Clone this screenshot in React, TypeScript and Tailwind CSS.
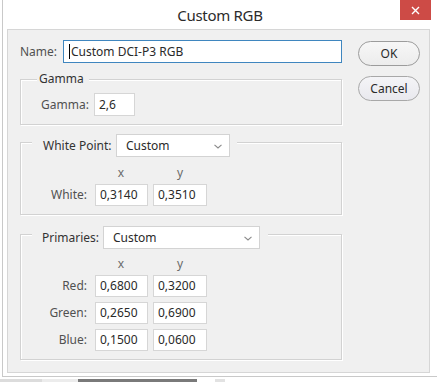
import React from "react";

const font = { fontFamily: '"Noto Sans", "Open Sans", sans-serif' };

function Select({ width }: { width: string }) {
  return (
    <div
      className={`${width} h-[23px] bg-white border border-[#d3d3d3] flex items-center justify-between pl-[9px] pr-[7px] text-[12px] text-[#2a2a2a]`}
    >
      <span>Custom</span>
      <svg width="8" height="5" viewBox="0 0 8 5" className="mt-[1px]">
        <path d="M0.5 0.8 L4 4 L7.5 0.8" fill="none" stroke="#8a8a8a" strokeWidth="1.1" />
      </svg>
    </div>
  );
}

function Val({ v, w }: { v: string; w: string }) {
  return (
    <div
      className={`${w} h-[22px] bg-white border border-[#d6d6d6] flex items-center pl-[4px] text-[12px] text-[#2a2a2a]`}
    >
      {v}
    </div>
  );
}

function Group({ children, className = "" }: { children: React.ReactNode; className?: string }) {
  return (
    <div
      className={`w-[322px] border border-[#d2d2d2] shadow-[inset_1px_1px_0_#ffffff,1px_1px_0_#ffffff] ${className}`}
    >
      {children}
    </div>
  );
}

function CoordGrid({ rows }: { rows: [string, string, string][] }) {
  return (
    <div className="grid grid-cols-[67px_53px_54px] gap-x-[7px] text-[12px]">
      <div className="h-[16px] mt-[8px]" />
      <div className="h-[16px] mt-[8px] leading-[16px] text-center text-[#6a6a6a]">x</div>
      <div className="h-[16px] mt-[8px] leading-[16px] text-center text-[#6a6a6a] -ml-[1px]">y</div>
    </div>
  );
}

export default function App() {
  return (
    <div className="w-[437px] h-[382px] bg-white overflow-hidden flex flex-col" style={font}>
      <div className="ml-[2px] w-[435px] h-[377px] border-l border-b border-[#c9c9c9] flex flex-col">
        {/* title bar */}
        <div className="h-[29px] grid grid-cols-[1fr_auto_1fr]">
          <div />
          <div className="text-[15px] tracking-[-0.3px] text-[#2b2b2b] leading-[29px] pt-[1px]">Custom RGB</div>
          <div className="flex justify-end pr-[6px]">
            <div className="w-[31px] h-[20px] bg-[#cd4b46] flex items-center justify-center">
              <svg width="9" height="9" viewBox="0 0 9 9">
                <path d="M1 1 L8 8 M8 1 L1 8" stroke="#ffffff" strokeWidth="1.4" />
              </svg>
            </div>
          </div>
        </div>
        {/* panel */}
        <div className="ml-[4px] w-[423px] h-[344px] bg-[#f0f0f0] border border-[#d6d6d6] flex pt-[10px] pl-[12px]">
          {/* left column */}
          <div className="w-[322px] flex flex-col">
            <div className="h-[23px] flex items-center">
              <div className="w-[43px] text-[12px] text-[#505050]">Name:</div>
              <div className="w-[279px] h-[23px] bg-white border border-[#3f86bf] flex items-center pl-[5px] text-[12px] text-[#2a2a2a]">
                <span className="w-px h-[15px] bg-black mr-[1px]" />
                <span>Custom DCI-P3 RGB</span>
              </div>
            </div>

            {/* Gamma */}
            <Group className="mt-[16px] pb-[8px]">
              <div className="-mt-[9px] h-[16px] ml-[16px] flex">
                <div className="bg-[#f0f0f0] pl-[2px] pr-[5px] leading-[16px] text-[12px] text-[#333333]">Gamma</div>
              </div>
              <div className="mt-[6px] flex items-center pl-[20px]">
                <div className="w-[53px] text-[12px] text-[#505050]">Gamma:</div>
                <div className="w-[41px] h-[23px] bg-white border border-[#d6d6d6] flex items-center pl-[4px] text-[12px] text-[#2a2a2a]">
                  2,6
                </div>
              </div>
            </Group>

            {/* White Point */}
            <Group className="mt-[17px] pb-[8px]">
              <div className="-mt-[9px] h-[23px] ml-[11px] flex">
                <div className="bg-[#f0f0f0] pl-[11px] pr-[7px] flex items-center gap-[6px]">
                  <span className="w-[67px] text-[12px] text-[#333333] whitespace-nowrap">White Point:</span>
                  <Select width="w-[114px]" />
                </div>
              </div>
              <div className="grid grid-cols-[67px_53px_54px] gap-x-[6px] text-[12px]">
                <div className="h-[16px] mt-[8px]" />
                <div className="h-[16px] mt-[8px] leading-[16px] text-center text-[#6a6a6a] ml-[1px]">x</div>
                <div className="h-[16px] mt-[8px] leading-[16px] text-center text-[#6a6a6a]">y</div>
                <div className="mt-[3px] h-[22px] flex items-center justify-end pr-[1px] text-[#505050]">White:</div>
                <div className="mt-[3px] ml-[1px]"><Val v="0,3140" w="w-[53px]" /></div>
                <div className="mt-[3px]"><Val v="0,3510" w="w-[54px]" /></div>
              </div>
            </Group>

            {/* Primaries */}
            <Group className="mt-[19px] pb-[8px]">
              <div className="-mt-[9px] h-[23px] ml-[11px] flex">
                <div className="bg-[#f0f0f0] pl-[10px] pr-[8px] flex items-center gap-[5px]">
                  <span className="w-[56px] text-[12px] text-[#333333] whitespace-nowrap">Primaries:</span>
                  <Select width="w-[157px]" />
                </div>
              </div>
              <div className="grid grid-cols-[67px_53px_54px] gap-x-[6px] text-[12px]">
                <div className="h-[16px] mt-[7px]" />
                <div className="h-[16px] mt-[7px] leading-[16px] text-center text-[#6a6a6a] ml-[1px]">x</div>
                <div className="h-[16px] mt-[7px] leading-[16px] text-center text-[#6a6a6a]">y</div>

                <div className="mt-[3px] h-[22px] flex items-center justify-end pr-[1px] text-[#505050]">Red:</div>
                <div className="mt-[3px] ml-[1px]"><Val v="0,6800" w="w-[53px]" /></div>
                <div className="mt-[3px]"><Val v="0,3200" w="w-[54px]" /></div>

                <div className="mt-[5px] h-[22px] flex items-center justify-end pr-[1px] text-[#505050]">Green:</div>
                <div className="mt-[5px] ml-[1px]"><Val v="0,2650" w="w-[53px]" /></div>
                <div className="mt-[5px]"><Val v="0,6900" w="w-[54px]" /></div>

                <div className="mt-[5px] h-[22px] flex items-center justify-end pr-[1px] text-[#505050]">Blue:</div>
                <div className="mt-[5px] ml-[1px]"><Val v="0,1500" w="w-[53px]" /></div>
                <div className="mt-[5px]"><Val v="0,0600" w="w-[54px]" /></div>
              </div>
            </Group>
          </div>

          {/* right column */}
          <div className="ml-[16px] mt-[1px] flex flex-col gap-[10px]">
            <div className="w-[62px] h-[25px] rounded-full border border-[#9c9c9c] bg-gradient-to-b from-[#f7f7f7] to-[#ececec] flex items-center justify-center text-[12px] text-[#2a2a2a]">
              OK
            </div>
            <div className="w-[62px] h-[25px] rounded-full border border-[#a8a8a8] bg-gradient-to-b from-[#f4f4f7] to-[#e9e9ee] flex items-center justify-center text-[12px] text-[#2a2a2a]">
              Cancel
            </div>
          </div>
        </div>
      </div>
      {/* bottom strip */}
      <div className="mt-[2px] h-[3px] flex">
        <div className="w-[42px] bg-[#dcdcdc]" />
        <div className="w-[36px] bg-[#ececec]" />
        <div className="w-[119px] bg-[#7a7a7a]" />
        <div className="w-[18px]" />
        <div className="w-[10px] bg-[#e2e2e2]" />
      </div>
    </div>
  );
}
